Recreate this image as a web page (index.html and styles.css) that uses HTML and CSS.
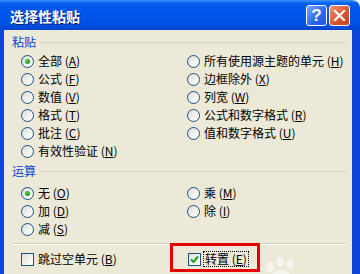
FILE: index.html
```html
<!DOCTYPE html>
<html lang="zh">
<head>
<meta charset="utf-8">
<link rel="stylesheet" href="styles.css">
</head>
<body>
<div class="window">
  <div class="titlebar">
    <span class="title">选择性粘贴</span>
    <div class="tbuttons">
      <span class="tbtn help">?</span>
      <span class="tbtn close"><svg width="13" height="13" viewBox="0 0 13 13"><path d="M2 2 L11 11 M11 2 L2 11" stroke="#fff" stroke-width="2.2" stroke-linecap="square"/></svg></span>
    </div>
  </div>
  <div class="body">
    <div class="section-head"><span>粘贴</span></div>
    <div class="grid paste">
      <label class="opt"><span class="radio on"></span>全部 (<u>A</u>)</label>
      <label class="opt"><span class="radio"></span>所有使用源主题的单元 (<u>H</u>)</label>
      <label class="opt"><span class="radio"></span>公式 (<u>F</u>)</label>
      <label class="opt"><span class="radio"></span>边框除外 (<u>X</u>)</label>
      <label class="opt"><span class="radio"></span>数值 (<u>V</u>)</label>
      <label class="opt"><span class="radio"></span>列宽 (<u>W</u>)</label>
      <label class="opt"><span class="radio"></span>格式 (<u>T</u>)</label>
      <label class="opt"><span class="radio"></span>公式和数字格式 (<u>R</u>)</label>
      <label class="opt"><span class="radio"></span>批注 (<u>C</u>)</label>
      <label class="opt"><span class="radio"></span>值和数字格式 (<u>U</u>)</label>
      <label class="opt"><span class="radio"></span>有效性验证 (<u>N</u>)</label>
    </div>
    <div class="section-head second"><span>运算</span></div>
    <div class="grid ops">
      <label class="opt"><span class="radio on"></span>无 (<u>O</u>)</label>
      <label class="opt"><span class="radio"></span>乘 (<u>M</u>)</label>
      <label class="opt"><span class="radio"></span>加 (<u>D</u>)</label>
      <label class="opt"><span class="radio"></span>除 (<u>I</u>)</label>
      <label class="opt"><span class="radio"></span>减 (<u>S</u>)</label>
    </div>
    <div class="sep"></div>
    <div class="grid checks">
      <label class="opt"><span class="check"></span>跳过空单元 (<u>B</u>)</label>
      <label class="opt"><span class="check"><svg width="11" height="11" viewBox="0 0 11 11"><path d="M2 5.5 L4.5 8 L9 2.5" fill="none" stroke="#21A121" stroke-width="2"/></svg></span><span class="focus">转置 (<u>E</u>)</span></label>
    </div>
    <div class="redbox"></div>
    <div class="paw">
      <span class="dot d1"></span><span class="dot d2"></span><span class="dot d3"></span><span class="dot d4"></span>
    </div>
  </div>
</div>
</body>
</html>
```
FILE: styles.css
```css
body {
  margin: 0;
  background: #ffffff;
  font-family: "Noto Sans CJK SC", "Noto Sans", sans-serif;
  font-size: 12px;
  color: #000;
}

.window {
  width: 360px;
  height: 274px;
  overflow: hidden;
  display: flex;
  flex-direction: column;
}

.titlebar {
  flex: none;
  height: 30px;
  display: flex;
  align-items: center;
  padding-left: 10px;
  background: linear-gradient(#3D95FF 0, #0A62F2 3px, #0058EE 7px, #0055EA 50%, #0051E2 80%, #0044CF 100%);
  border-top-right-radius: 8px;
}

.title {
  color: #ffffff;
  font-size: 14px;
  font-weight: bold;
  letter-spacing: 0;
  text-shadow: 1px 1px 0 #0A1E70;
  margin-top: 1px;
}

.tbuttons {
  margin-left: auto;
  display: flex;
  gap: 2px;
  padding-right: 10px;
}

.tbtn {
  width: 21px;
  height: 21px;
  box-sizing: border-box;
  border: 1px solid #ffffff;
  border-radius: 3px;
  display: flex;
  align-items: center;
  justify-content: center;
}

.help {
  background: linear-gradient(135deg, #7AA6FF, #2A66EC 60%, #2058DA);
  color: #ffffff;
  font-family: "Liberation Sans", sans-serif;
  font-weight: bold;
  font-size: 17px;
  line-height: 1;
}

.close {
  background: linear-gradient(135deg, #EE9676, #DE5430 55%, #C7401D);
}

.body {
  flex: 1;
  position: relative;
  background: #ECE9D8;
  border-left: 4px solid #0A47DA;
  border-right: 8px solid #0A45D6;
}

.section-head {
  display: flex;
  align-items: center;
  height: 14px;
  line-height: 14px;
  margin: 5px 6px 0 8px;
  color: #0046D5;
}

.section-head::after {
  content: "";
  flex: 1;
  height: 1px;
  background: #D0D0BF;
  margin-left: 4px;
}

.section-head.second {
  margin-top: 4px;
}

.grid {
  display: grid;
  grid-template-columns: 166px 1fr;
  grid-auto-rows: 18px;
  padding-left: 17px;
}

.paste {
  margin-top: 3px;
}

.ops {
  margin-top: 6px;
}

.opt {
  display: flex;
  align-items: center;
  white-space: nowrap;
  line-height: 14px;
}

.opt u {
  text-decoration: underline;
}

.radio {
  width: 13px;
  height: 13px;
  box-sizing: border-box;
  border-radius: 50%;
  border: 1px solid #1C5180;
  background: linear-gradient(135deg, #DCDCD7, #F4F4F0 60%, #ffffff);
  margin-right: 4px;
  display: flex;
  align-items: center;
  justify-content: center;
}

.radio.on::after {
  content: "";
  width: 5px;
  height: 5px;
  border-radius: 50%;
  background: radial-gradient(circle at 40% 40%, #55D455, #21A121 60%, #1A8A1A);
}

.sep {
  height: 1px;
  background: #D0D0BF;
  border-bottom: 1px solid #ffffff;
  margin: 5px 6px 0 8px;
}

.checks {
  margin-top: 6px;
  grid-auto-rows: 16px;
}

.check {
  width: 13px;
  height: 13px;
  box-sizing: border-box;
  border: 1px solid #1C5180;
  background: linear-gradient(135deg, #DCDCD7, #F4F4F0 60%, #ffffff);
  margin-right: 4px;
  display: flex;
  align-items: center;
  justify-content: center;
}

.checks .opt:nth-child(2) .check {
  margin-left: 1px;
  margin-right: 3px;
}

.focus {
  outline: 1px dotted #000;
  padding: 0 1px;
}

.redbox {
  position: absolute;
  left: 166px;
  top: 213px;
  width: 90px;
  height: 29px;
  box-sizing: border-box;
  border: 3px solid #E60000;
}

.paw {
  position: absolute;
  left: 258px;
  top: 224px;
  width: 40px;
  height: 24px;
}

.dot {
  position: absolute;
  border-radius: 50%;
  background: #F5F4EE;
}

.d1 { left: 4px; top: 8px; width: 8px; height: 10px; }
.d2 { left: 14px; top: 3px; width: 8px; height: 10px; }
.d3 { left: 24px; top: 5px; width: 8px; height: 10px; }
.d4 { left: 10px; top: 16px; width: 18px; height: 12px; }
```
